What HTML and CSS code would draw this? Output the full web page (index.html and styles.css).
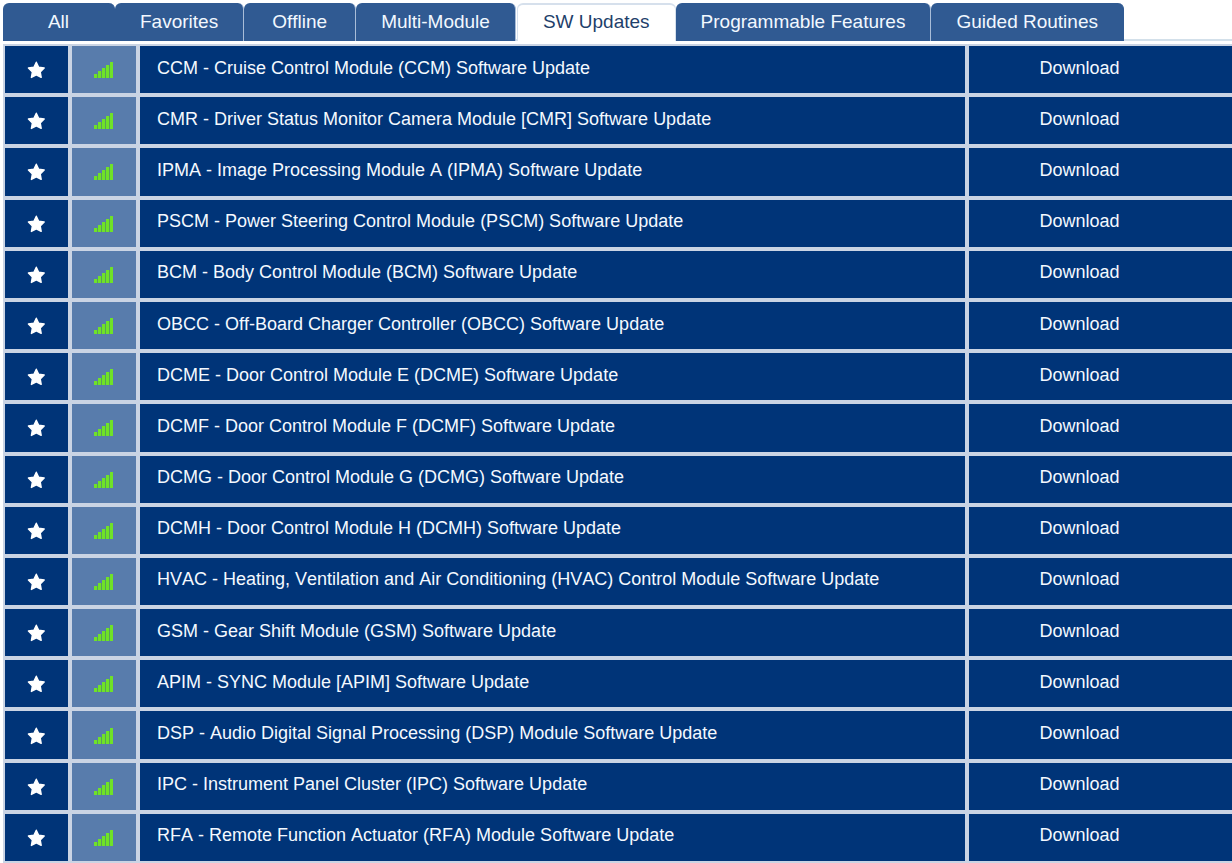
FILE: index.html
```html
<!DOCTYPE html>
<html lang="en">
<head>
<meta charset="utf-8">
<title>SW Updates</title>
<link rel="stylesheet" href="styles.css">
</head>
<body>
<svg class="sprite" aria-hidden="true">
  <symbol id="star" viewBox="0 0 20 18">
    <path d="M9.3 1.2 11.7 6.2 17.2 7 13.2 10.9 14.2 16.4 9.3 13.8 4.4 16.4 5.4 10.9 1.4 7 6.9 6.2Z" fill="#fff" stroke="#fff" stroke-width="1.4" stroke-linejoin="round"/>
  </symbol>
  <symbol id="signal" viewBox="0 0 20 18">
    <path d="M0 13h3v4H0zM4 10h3v7H4zM8 7h3v10H8zM12 4h3v13h-3zM16 1h3v16h-3z" fill="#6fe228"/>
    <path d="M3 13h1v4H3zM7 10h1v7H7zM11 7h1v10h-1zM15 4h1v13h-1z" fill="#58a05a"/>
  </symbol>
</svg>
<nav class="tabs" role="tablist">
  <button class="tab" role="tab">All</button>
  <button class="tab" role="tab">Favorites</button>
  <button class="tab" role="tab">Offline</button>
  <button class="tab" role="tab">Multi-Module</button>
  <button class="tab tab-active" role="tab" aria-selected="true">SW Updates</button>
  <button class="tab" role="tab">Programmable Features</button>
  <button class="tab" role="tab">Guided Routines</button>
</nav>
<table class="updates">
  <colgroup><col class="col-star"><col class="col-signal"><col><col class="col-action"></colgroup>
  <tbody id="rows"></tbody>
</table>
<script src="rows.js"></script>
</body>
</html>
```
FILE: styles.css
```css
* {
  box-sizing: border-box;
}

body {
  margin: 0;
  padding: 3px 0 0 3px;
  background: #fff;
  font-family: "Liberation Sans", Arial, sans-serif;
  font-size: 18px;
  font-kerning: none;
}

button {
  font: inherit;
  font-kerning: none;
  cursor: pointer;
}

.sprite {
  display: none;
}

.tabs {
  display: flex;
  height: 38px;
  margin-bottom: 3px;
  box-shadow: inset 0 -2px #d3e0ea;
}

.tab {
  flex: none;
  min-width: 112px;
  padding: 0 25px;
  border: 0;
  border-right: 1px solid #a9bdd8;
  border-radius: 6px 6px 0 0;
  background: #305a92;
  color: #f2f8ff;
  font-size: 19px;
}

.tab:first-child,
.tab:last-child {
  border-right-color: #305a92;
}

.tab-active {
  margin-left: 1px;
  border: 1px solid #d6e0ec;
  border-top-width: 2px;
  border-bottom: 0;
  padding: 0 25px 2px;
  background: #fff;
  color: #1f3f6b;
}

.updates {
  width: 100%;
  height: calc(100vh - 44px);
  table-layout: fixed;
  border-spacing: 0;
}

.col-star {
  width: 67px;
}

.col-signal {
  width: 68px;
}

.col-action {
  width: 265px;
}

.cell {
  padding: 0;
  border: 2px solid #cad4e4;
  background: #003478;
  color: #f4f9ff;
  vertical-align: middle;
}

.signal {
  background: #587cac;
  text-align: center;
}

.icon {
  display: block;
  width: 20px;
  height: 18px;
  margin: 0 auto;
}

.favorite {
  display: block;
  width: 100%;
  padding: 1px 0 0;
  border: 0;
  background: none;
}

.signal .icon {
  margin-top: 1px;
}

.name {
  padding: 0 17px 3px;
}

.action {
  padding: 0 42px 3px 0;
  border-right: 0;
  text-align: center;
}

.download {
  padding: 0;
  border: 0;
  background: none;
  color: inherit;
}
```
FILE: rows.js
```javascript
const updates = [
  "CCM - Cruise Control Module (CCM) Software Update",
  "CMR - Driver Status Monitor Camera Module [CMR] Software Update",
  "IPMA - Image Processing Module A (IPMA) Software Update",
  "PSCM - Power Steering Control Module (PSCM) Software Update",
  "BCM - Body Control Module (BCM) Software Update",
  "OBCC - Off-Board Charger Controller (OBCC) Software Update",
  "DCME - Door Control Module E (DCME) Software Update",
  "DCMF - Door Control Module F (DCMF) Software Update",
  "DCMG - Door Control Module G (DCMG) Software Update",
  "DCMH - Door Control Module H (DCMH) Software Update",
  "HVAC - Heating, Ventilation and Air Conditioning (HVAC) Control Module Software Update",
  "GSM - Gear Shift Module (GSM) Software Update",
  "APIM - SYNC Module [APIM] Software Update",
  "DSP - Audio Digital Signal Processing (DSP) Module Software Update",
  "IPC - Instrument Panel Cluster (IPC) Software Update",
  "RFA - Remote Function Actuator (RFA) Module Software Update"
];

document.getElementById("rows").innerHTML = updates.map(name => `
  <tr>
    <td class="cell"><button class="favorite" aria-label="Add to favorites"><svg class="icon"><use href="#star"/></svg></button></td>
    <td class="cell signal"><svg class="icon" role="img" aria-label="Online"><use href="#signal"/></svg></td>
    <td class="cell name">${name}</td>
    <td class="cell action"><button class="download">Download</button></td>
  </tr>`).join("");
```
